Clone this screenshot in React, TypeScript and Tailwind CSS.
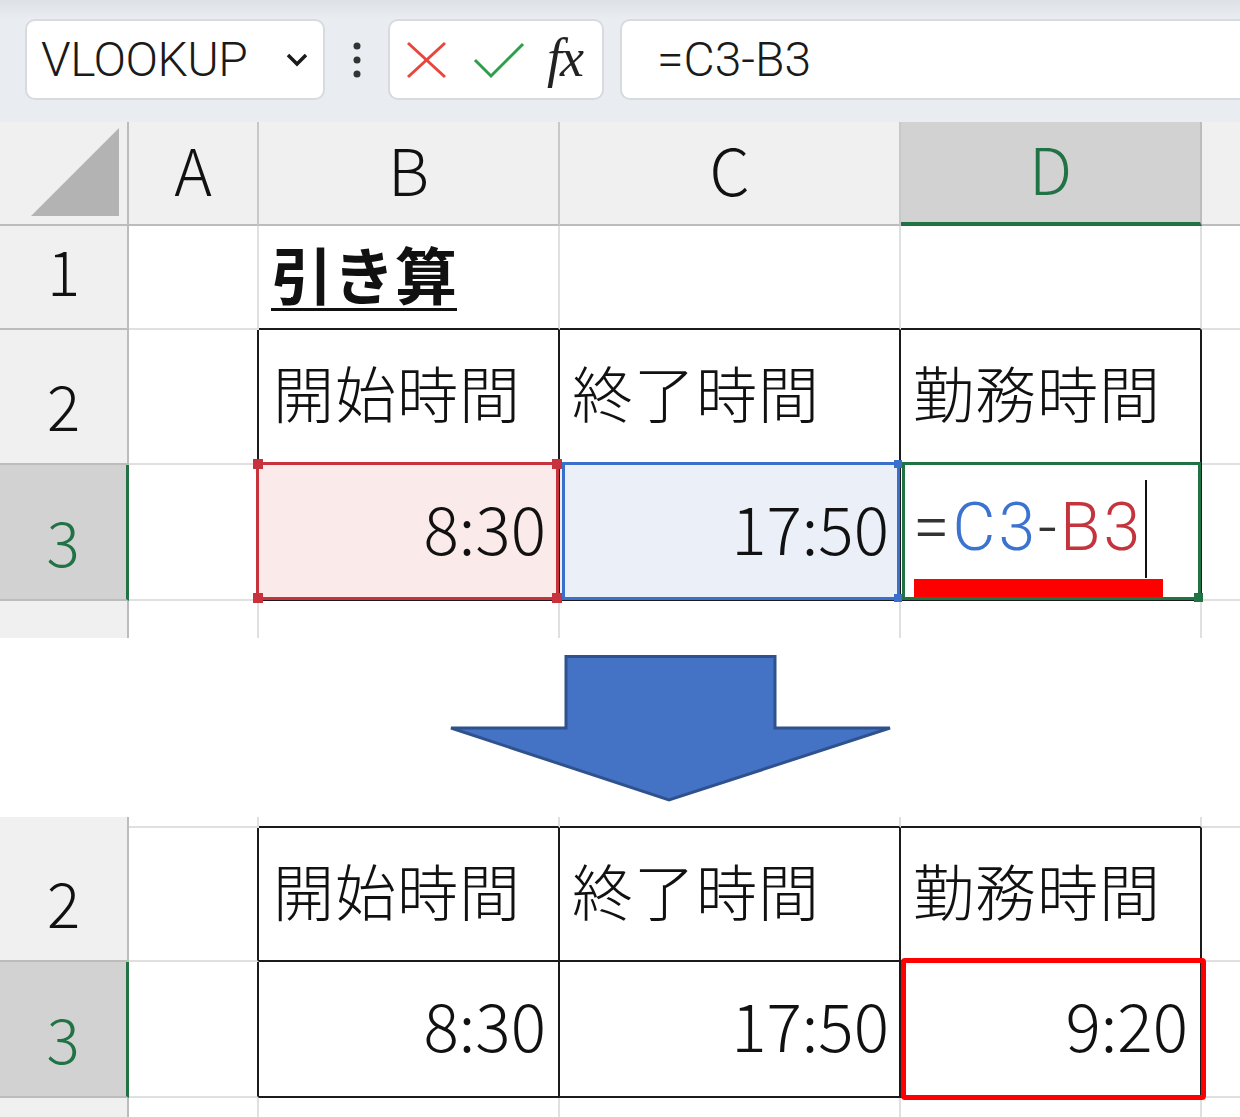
import type { ReactNode } from "react";

// grid column widths: row header, A, B, C, D, rest
const W = ["w-[129px]", "w-[130px]", "w-[301px]", "w-[341px]", "w-[301px]", "flex-1"];

type Edge = "g" | "k" | "h" | "n";

const rightCls: Record<Edge, string> = {
  g: "border-r-2 border-r-[#e0e0e0]",
  k: "border-r-2 border-r-[#1b1b1b]",
  h: "border-r-2 border-r-[#bcbcbc]",
  n: "",
};
const bottomCls: Record<Edge, string> = {
  g: "border-b-2 border-b-[#e0e0e0]",
  k: "border-b-2 border-b-[#1b1b1b]",
  h: "border-b-2 border-b-[#bcbcbc]",
  n: "",
};

function Cell({
  col,
  r = "g",
  b = "g",
  className = "",
  children,
}: {
  col: number;
  r?: Edge;
  b?: Edge;
  className?: string;
  children?: ReactNode;
}) {
  return (
    <div className={`${W[col]} shrink-0 h-full relative ${rightCls[r]} ${bottomCls[b]} ${className}`}>
      {children}
    </div>
  );
}

function RowHead({ n, selected = false, b = "h" }: { n?: string; selected?: boolean; b?: Edge }) {
  return (
    <div
      className={`w-[129px] shrink-0 h-full flex items-end justify-center pb-[28px] text-[62px] leading-none font-light ${bottomCls[b]} ${
        selected
          ? "bg-[#d2d2d2] border-r-[3px] border-r-[#217346] text-[#217346]"
          : "bg-[#f0f0f0] border-r-2 border-r-[#bcbcbc] text-[#111]"
      }`}
    >
      {n}
    </div>
  );
}

function Toolbar() {
  return (
    <div className="h-[122px] bg-linear-to-b from-[#dde1e5] via-[#e9ecf0] via-15% to-[#e9ecf0] flex items-start pt-[19px] pl-[25px]">
      <div className="w-[300px] h-[81px] bg-white rounded-[10px] border-2 border-[#d7dadf] flex items-center justify-between pl-[14px] pr-[14px]">
        <span className="text-[48px] font-light text-[#1a1a1a] tracking-[-0.5px]" style={{ fontFamily: "Roboto, sans-serif" }}>
          VLOOKUP
        </span>
        <svg width="24" height="16" viewBox="0 0 24 16">
          <polyline points="3,3 12,12 21,3" fill="none" stroke="#1a1a1a" strokeWidth="3.5" />
        </svg>
      </div>
      <div className="w-[63px] h-[81px] flex items-center justify-center">
        <svg width="10" height="36" viewBox="0 0 10 36">
          <circle cx="5" cy="4" r="3.5" fill="#333" />
          <circle cx="5" cy="18" r="3.5" fill="#333" />
          <circle cx="5" cy="32" r="3.5" fill="#333" />
        </svg>
      </div>
      <div className="w-[216px] h-[81px] bg-white rounded-[10px] border-2 border-[#d7dadf] flex items-center pl-[15px]">
        <svg width="44" height="40" viewBox="0 0 44 40">
          <line x1="3" y1="3" x2="40" y2="37" stroke="#e8453c" strokeWidth="3" />
          <line x1="40" y1="3" x2="3" y2="37" stroke="#e8453c" strokeWidth="3" />
        </svg>
        <svg width="52" height="40" viewBox="0 0 52 40" className="ml-[24px]">
          <polyline points="2,20 18,36 50,4" fill="none" stroke="#2e9e4d" strokeWidth="3" />
        </svg>
        <span
          className="ml-[22px] text-[54px] italic text-[#222] leading-none -mt-[4px] tracking-[-2px]"
          style={{ fontFamily: "'Liberation Serif', serif" }}
        >
          fx
        </span>
      </div>
      <div className="ml-[16px] -mr-[20px] flex-1 h-[81px] bg-white rounded-[10px] border-2 border-[#d7dadf] flex items-center pl-[35px]">
        <span className="text-[48px] font-light text-[#1a1a1a]" style={{ fontFamily: "Roboto, sans-serif" }}>
          =C3-B3
        </span>
      </div>
    </div>
  );
}

function ColumnHeads() {
  const letters = ["A", "B", "C", "D"];
  return (
    <div className="flex h-[104px] bg-[#f0f0f0]">
      <div className="w-[129px] shrink-0 h-full border-r-2 border-r-[#bcbcbc] border-b-2 border-b-[#bcbcbc] flex items-end justify-end pr-[6px] pb-[6px]">
        <svg width="90" height="90" viewBox="0 0 90 90">
          <polygon points="0,88 88,0 88,88" fill="#b3b3b3" />
        </svg>
      </div>
      {letters.map((l, i) =>
        l === "D" ? (
          <div
            key={l}
            className={`${W[i + 1]} shrink-0 h-full bg-[#d2d2d2] border-r-2 border-r-[#bcbcbc] border-b-4 border-b-[#217346] flex items-center justify-center text-[64px] font-light text-[#217346] pb-[10px]`}
          >
            {l}
          </div>
        ) : (
          <div
            key={l}
            className={`${W[i + 1]} shrink-0 h-full border-r-2 border-r-[#c8c8c8] border-b-2 border-b-[#bcbcbc] flex items-center justify-center text-[64px] font-light text-[#111] pb-[10px]`}
          >
            {l}
          </div>
        )
      )}
      <div className="flex-1 h-full border-b-2 border-b-[#bcbcbc]" />
    </div>
  );
}

function HeaderRow({ h }: { h: string }) {
  const labels = ["開始時間", "終了時間", "勤務時間"];
  return (
    <div className={`flex ${h}`}>
      <RowHead n="2" />
      <Cell col={1} r="k" />
      {labels.map((t, i) => (
        <Cell key={t} col={i + 2} r="k" b="k" className={`flex items-center pb-[10px] ${i === 0 ? "pl-[14px]" : "pl-[12px]"}`}>
          <span className="text-[61px] font-light text-[#111] leading-none tracking-[1px]">{t}</span>
        </Cell>
      ))}
      <Cell col={5} r="n" />
    </div>
  );
}

function Num({ children }: { children: ReactNode }) {
  return <span className="text-[66px] font-light text-[#111] leading-none">{children}</span>;
}

export default function App() {
  return (
    <div
      className="w-[1240px] h-[1117px] overflow-hidden bg-white"
      style={{ fontFamily: "'Noto Sans CJK JP', 'Noto Sans', sans-serif" }}
    >
      <Toolbar />
      <ColumnHeads />

      {/* row 1 */}
      <div className="flex h-[104px]">
        <RowHead n="1" />
        <Cell col={1} />
        <Cell col={2} b="k" className="flex items-center pl-[12px] pb-[8px]">
          <span className="text-[62px] font-bold text-[#111] leading-none underline decoration-[3px] underline-offset-[8px]">
            引き算
          </span>
        </Cell>
        <Cell col={3} b="k" />
        <Cell col={4} b="k" />
        <Cell col={5} r="n" />
      </div>

      <HeaderRow h="h-[135px]" />

      {/* row 3 - editing */}
      <div className="flex h-[136px]">
        <RowHead n="3" selected />
        <Cell col={1} r="k" />
        <Cell col={2} r="k" b="k" className="bg-[#fbeaea] flex items-center justify-end pr-[12px] pb-[12px]">
          <div className="absolute -top-[3px] -left-[3px] -right-[1px] -bottom-[1px] border-[3px] border-[#c8323c] z-10">
            <div className="absolute -top-[6px] -left-[6px] w-[10px] h-[10px] bg-[#c8323c]" />
            <div className="absolute -top-[6px] -right-[6px] w-[10px] h-[10px] bg-[#c8323c]" />
            <div className="absolute -bottom-[6px] -left-[6px] w-[10px] h-[10px] bg-[#c8323c]" />
            <div className="absolute -bottom-[6px] -right-[6px] w-[10px] h-[10px] bg-[#c8323c]" />
          </div>
          <Num>8:30</Num>
        </Cell>
        <Cell col={3} r="k" b="k" className="bg-[#eaeff8] flex items-center justify-end pr-[10px] pb-[12px]">
          <div className="absolute -top-[3px] left-[2px] -right-[1px] -bottom-[1px] border-[3px] border-[#3a6fcc] z-10">
            <div className="absolute -top-[5px] -right-[5px] w-[8px] h-[8px] bg-[#3a6fcc]" />
            <div className="absolute -bottom-[5px] -right-[5px] w-[8px] h-[8px] bg-[#3a6fcc]" />
          </div>
          <Num>17:50</Num>
        </Cell>
        <Cell col={4} r="k" b="k" className="flex items-center pl-[12px] pb-[8px]">
          <div className="absolute -top-[3px] left-[1px] -right-[1px] -bottom-[1px] border-[3px] border-[#217346] z-10">
            <div className="absolute -bottom-[5px] -right-[5px] w-[9px] h-[9px] bg-[#217346]" />
          </div>
          <span className="text-[66px] font-light leading-none tracking-[3px]" style={{ fontFamily: "Roboto, sans-serif" }}>
            <span className="text-[#333]">=</span>
            <span className="text-[#3b73cf]">C3</span>
            <span className="text-[#333]">-</span>
            <span className="text-[#c4343c]">B3</span>
          </span>
          <div className="absolute left-[244px] top-[15px] w-[2px] h-[98px] bg-[#111]" />
          <div className="absolute left-[13px] top-[114px] w-[249px] h-[18px] bg-[#ff0000] z-20" />
        </Cell>
        <Cell col={5} r="n" />
      </div>

      {/* trailing grid */}
      <div className="flex h-[37px]">
        <RowHead b="n" />
        <Cell col={1} b="n" />
        <Cell col={2} b="n" />
        <Cell col={3} b="n" />
        <Cell col={4} b="n" />
        <Cell col={5} r="n" b="n" />
      </div>

      {/* arrow */}
      <div className="h-[179px] pt-[17px] pl-[449px]">
        <svg width="444" height="148" viewBox="0 0 444 148">
          <polygon
            points="117,1.5 326,1.5 326,73 441,73 220,145 2,73 117,73"
            fill="#4472c4"
            stroke="#2f528f"
            strokeWidth="3"
            strokeLinejoin="miter"
          />
        </svg>
      </div>

      {/* result section */}
      <div className="flex h-[11px]">
        <RowHead b="h" />
        <Cell col={1} />
        <Cell col={2} b="k" />
        <Cell col={3} b="k" />
        <Cell col={4} b="k" />
        <Cell col={5} r="n" />
      </div>

      <HeaderRow h="h-[134px]" />

      <div className="flex h-[136px]">
        <RowHead n="3" selected />
        <Cell col={1} r="k" />
        <Cell col={2} r="k" b="k" className="flex items-center justify-end pr-[12px] pb-[12px]">
          <Num>8:30</Num>
        </Cell>
        <Cell col={3} r="k" b="k" className="flex items-center justify-end pr-[10px] pb-[12px]">
          <Num>17:50</Num>
        </Cell>
        <Cell col={4} r="k" b="k" className="flex items-center justify-end pr-[12px] pb-[12px]">
          <div className="absolute -top-[4px] left-[0px] -right-[6px] -bottom-[4px] border-[5px] border-[#ff0000] rounded-[4px] z-10" />
          <Num>9:20</Num>
        </Cell>
        <Cell col={5} r="n" />
      </div>

      <div className="flex h-[19px]">
        <RowHead b="n" />
        <Cell col={1} b="n" />
        <Cell col={2} b="n" />
        <Cell col={3} b="n" />
        <Cell col={4} b="n" />
        <Cell col={5} r="n" b="n" />
      </div>
    </div>
  );
}
